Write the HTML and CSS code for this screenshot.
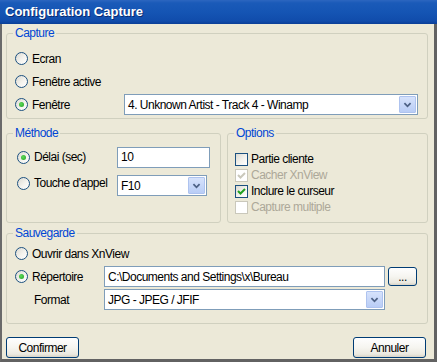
FILE: index.html
```html
<!DOCTYPE html>
<html lang="fr">
  <head>
    <meta charset="UTF-8" />
    <title>Configuration Capture</title>
    <link rel="stylesheet" href="styles.css">
  </head>
  <body>
    <div class="window">
      <div class="titlebar">Configuration Capture</div>

      <div class="content">
        <!-- Capture -->
        <fieldset class="group capture">
          <legend>Capture</legend>
          <div class="row"><span class="radio"></span>Ecran</div>
          <div class="row"><span class="radio"></span>Fenêtre active</div>
          <div class="row">
            <span class="label w-fen"><span class="radio checked"></span>Fenêtre</span>
            <div class="combo combo-window">
              <span class="value">4. Unknown Artist - Track 4 - Winamp</span>
              <span class="arrow"><svg width="17" height="17" viewBox="0 0 17 17"><path d="M5 7 L8.5 10.5 L12 7" fill="none" stroke="#4d6185" stroke-width="2"/></svg></span>
            </div>
          </div>
        </fieldset>

        <div class="pair">
          <!-- Méthode -->
          <fieldset class="group methode">
            <legend>Méthode</legend>
            <div class="row">
              <span class="label w-meth"><span class="radio checked"></span>Délai (sec)</span>
              <input class="field field-delay" type="text" value="10" />
            </div>
            <div class="row row-top">
              <span class="label w-meth"><span class="radio"></span>Touche d'appel</span>
              <div class="combo combo-key">
                <span class="value">F10</span>
                <span class="arrow"><svg width="17" height="17" viewBox="0 0 17 17"><path d="M5 7 L8.5 10.5 L12 7" fill="none" stroke="#4d6185" stroke-width="2"/></svg></span>
              </div>
            </div>
          </fieldset>

          <!-- Options -->
          <fieldset class="group options">
            <legend>Options</legend>
            <div class="check-row"><span class="check"></span>Partie cliente</div>
            <div class="check-row disabled">
              <span class="check"><svg width="11" height="11" viewBox="0 0 11 11"><path d="M2 5 L4.5 7.5 L9 3" fill="none" stroke="#cac8bb" stroke-width="2"/></svg></span>Cacher XnView
            </div>
            <div class="check-row">
              <span class="check"><svg width="11" height="11" viewBox="0 0 11 11"><path d="M2 5 L4.5 7.5 L9 3" fill="none" stroke="#21a121" stroke-width="2"/></svg></span>Inclure le curseur
            </div>
            <div class="check-row disabled"><span class="check"></span>Capture multiple</div>
          </fieldset>
        </div>

        <!-- Sauvegarde -->
        <fieldset class="group sauvegarde">
          <legend>Sauvegarde</legend>
          <div class="row"><span class="radio"></span>Ouvrir dans XnView</div>
          <div class="row">
            <span class="label w-save"><span class="radio checked"></span>Répertoire</span>
            <input class="field field-path" type="text" value="C:\Documents and Settings\x\Bureau" />
            <button class="btn btn-browse">...</button>
          </div>
          <div class="row">
            <span class="label w-save format">Format</span>
            <div class="combo combo-format">
              <span class="value">JPG - JPEG / JFIF</span>
              <span class="arrow"><svg width="17" height="17" viewBox="0 0 17 17"><path d="M5 7 L8.5 10.5 L12 7" fill="none" stroke="#4d6185" stroke-width="2"/></svg></span>
            </div>
          </div>
        </fieldset>

        <div class="buttons">
          <button class="btn btn-main">Confirmer</button>
          <button class="btn btn-main">Annuler</button>
        </div>
      </div>
    </div>
  </body>
</html>
```

FILE: styles.css
```css
* {
  box-sizing: border-box;
}
html,
body {
  margin: 0;
  padding: 0;
}
body {
  width: 437px;
  height: 362px;
  overflow: hidden;
  background: #ece9d8;
  font-family: "Liberation Sans", Arial, sans-serif;
  font-size: 12px;
  letter-spacing: -0.5px;
  color: #000;
}
.window {
  width: 437px;
  height: 362px;
  display: flex;
  flex-direction: column;
}
.titlebar {
  height: 24px;
  line-height: 24px;
  padding-left: 5px;
  color: #fff;
  font-size: 13px;
  font-weight: bold;
  letter-spacing: 0;
  text-shadow: 1px 1px #0a2a70;
  background: linear-gradient(#2c66c0 0, #1a5ab8 3px, #1555b4 50%, #104cab 88%, #0a3f96 100%);
}
.content {
  flex: 1;
  display: flex;
  flex-direction: column;
  padding: 3px 6px 0 4px;
  border-left: 2px solid #6a6a6a;
  border-right: 3px solid #626262;
  border-bottom: 3px solid #626262;
}
/* group boxes */
.group {
  margin: 0;
  padding: 0;
  border: 1px solid #d0d0bf;
  border-radius: 3px;
  min-width: 0;
}
.group legend {
  margin-left: 6px;
  padding: 0 2px;
  line-height: 13px;
  color: #0046d5;
}
.capture {
  height: 92px;
  padding-top: 7px;
}
.pair {
  display: flex;
  gap: 6px;
  margin-top: 8px;
}
.methode {
  width: 215px;
  height: 96px;
  padding-top: 6px;
}
.options {
  flex: 1;
  height: 96px;
  padding-top: 11px;
}
.sauvegarde {
  height: 97px;
  margin-top: 4px;
  padding-top: 2px;
}
/* rows */
.row {
  display: flex;
  align-items: center;
  height: 23px;
  padding-left: 8px;
}
.methode .row {
  height: 22px;
  padding-left: 10px;
}
.methode .row + .row {
  margin-top: 4px;
}
.row-top {
  align-items: flex-start;
}
.row-top .label {
  height: 22px;
}
.row-top .combo {
  margin-top: 3px;
}
.label {
  display: flex;
  align-items: center;
  flex: none;
}
.w-fen {
  width: 109px;
}
.w-meth {
  width: 100px;
}
.w-save {
  width: 89px;
}
.format {
  padding-left: 19px;
}
/* radios */
.radio {
  width: 13px;
  height: 13px;
  margin-right: 4px;
  border: 1px solid #1c5180;
  border-radius: 50%;
  background: linear-gradient(135deg, #dcdad2 0%, #f4f3ee 55%, #fff 100%);
  display: flex;
  align-items: center;
  justify-content: center;
  flex: none;
}
.radio.checked::after {
  content: "";
  width: 5px;
  height: 5px;
  border-radius: 50%;
  background: radial-gradient(circle at 40% 40%, #5ed95a, #21a121);
}
/* checkboxes */
.check-row {
  display: flex;
  align-items: center;
  height: 16px;
  padding-left: 7px;
}
.check {
  width: 13px;
  height: 13px;
  margin-right: 3px;
  border: 1px solid #1c5180;
  background: linear-gradient(135deg, #dcdad2 0%, #f4f3ee 55%, #fff 100%);
  display: flex;
  align-items: center;
  justify-content: center;
  flex: none;
}
.check svg {
  display: block;
}
.disabled {
  color: #aca899;
}
.disabled .check {
  border-color: #cac8bb;
  background: #fff;
}
/* edit fields and combos */
.field {
  height: 21px;
  margin: 0;
  padding: 0 3px;
  border: 1px solid #7f9db9;
  background: #fff;
  font-family: inherit;
  font-size: 12px;
  letter-spacing: -0.5px;
  color: #000;
  outline: none;
}
.field-delay {
  width: 93px;
}
.field-path {
  width: 281px;
}
.combo {
  height: 21px;
  display: flex;
  align-items: stretch;
  border: 1px solid #7f9db9;
  background: #fff;
}
.combo .value {
  flex: 1;
  display: flex;
  align-items: center;
  padding-left: 3px;
  white-space: nowrap;
  overflow: hidden;
}
.combo .arrow {
  width: 17px;
  margin: 1px;
  background: linear-gradient(#d6e2fb, #b9cdf6);
  border: 1px solid #aec3ef;
  border-radius: 1px;
  display: flex;
  align-items: center;
  justify-content: center;
}
.combo .arrow svg {
  display: block;
}
.combo-window {
  width: 294px;
}
.combo-key {
  width: 90px;
}
.combo-format {
  width: 281px;
}
/* buttons */
.btn {
  margin: 0;
  padding: 0;
  height: 21px;
  border: 1px solid #003c74;
  border-radius: 3px;
  background: linear-gradient(#fefefe 0%, #f6f5f0 50%, #ebe9e0 85%, #d8d3c6 100%);
  font-family: inherit;
  font-size: 12px;
  letter-spacing: -0.5px;
  color: #000;
}
.btn-browse {
  width: 29px;
  height: 19px;
  margin-left: 3px;
}
.buttons {
  display: flex;
  justify-content: space-between;
  margin-top: 13px;
  padding-right: 2px;
}
.btn-main {
  width: 73px;
}
```
